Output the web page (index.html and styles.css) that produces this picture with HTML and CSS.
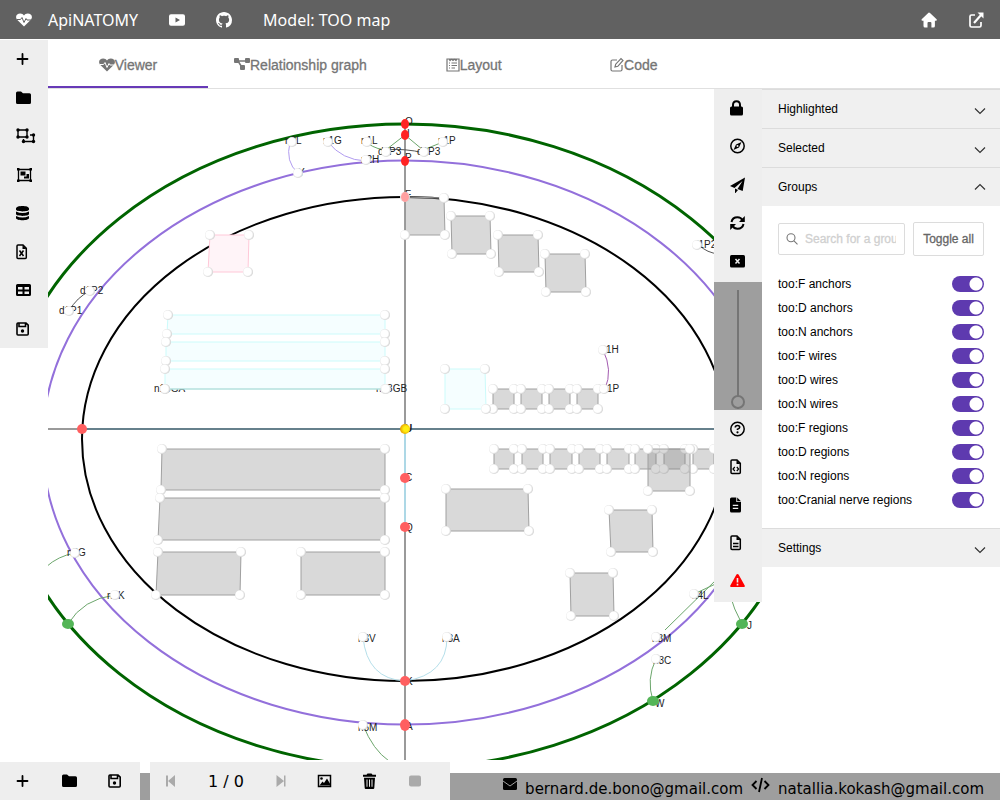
FILE: index.html
```html
<!DOCTYPE html>
<html lang="en">
<head>
<meta charset="utf-8">
<title>ApiNATOMY</title>
<link rel="stylesheet" href="styles.css">
</head>
<body>
<svg class="sprite" aria-hidden="true">
  <symbol id="heart" viewBox="0 0 16 16"><path fill="currentColor" d="M8 14.6 1.6 8.2C-1.6 4.8.7 1.4 4.2 1.4 6 1.4 7.2 2.3 8 3.4 8.8 2.3 10 1.4 11.8 1.4c3.5 0 5.8 3.4 2.6 6.8z"/><path fill="none" stroke="var(--cut)" d="M1 7.5h3.5L6 5.500l2 5 2-4 1 1.500h4"/></symbol>
  <symbol id="youtube" viewBox="0 0 16 16"><path fill="currentColor" fill-rule="evenodd" d="M2 2.300h12q2 0 2 2v7.400q0 2-2 2H2q-2 0-2-2V4.300q0-2 2-2zM6.500 5.500v5L11 8z"/></symbol>
  <symbol id="github" viewBox="0 0 16 16"><path fill="currentColor" d="M8 0C3.580 0 0 3.580 0 8c0 3.540 2.290 6.530 5.470 7.590.4.070.550-.170.550-.380 0-.190-.010-.820-.010-1.490-2.010.370-2.530-.490-2.690-.940-.090-.230-.480-.940-.820-1.130-.280-.150-.680-.520-.010-.530.630-.010 1.080.580 1.230.820.720 1.210 1.870.870 2.330.660.070-.520.280-.870.510-1.070-1.780-.200-3.640-.890-3.640-3.950 0-.870.310-1.590.820-2.150-.080-.200-.360-1.020.080-2.120 0 0 .670-.210 2.200.820.640-.180 1.320-.270 2-.270s1.360.090 2 .270c1.530-1.040 2.200-.820 2.200-.820.440 1.100.160 1.920.080 2.120.510.560.820 1.270.820 2.150 0 3.070-1.870 3.750-3.650 3.950.290.250.540.730.540 1.480 0 1.070-.010 1.930-.010 2.200 0 .210.150.460.550.380A8.010 8.010 0 0 0 16 8c0-4.420-3.580-8-8-8z"/></symbol>
  <symbol id="home" viewBox="0 0 16 16"><path fill="currentColor" d="M8 .5q.5 0 1 .5l6.600 6.200q.8 1.300-.7 1.500h-1V14q0 1.500-1.500 1.500h-2V11q0-1-1-1H7.500q-1 0-1 1v4.500H4q-1.500 0-1.500-1.500V8.700h-1Q0 8.500.7 7.200L7.200 1Q7.500.5 8 .5z"/></symbol>
  <symbol id="external" viewBox="0 0 16 16"><path fill="none" stroke="currentColor" stroke-width="1.700" d="M7 3H3.500Q2 3 2 4.500v9Q2 15 3.500 15h8q1.500 0 1.500-1.500V10"/><path fill="none" stroke="currentColor" stroke-width="2.200" d="m6 11 7.500-8.500"/><path fill="currentColor" d="M9.500.5h6v6z"/></symbol>
  <symbol id="graph" viewBox="0 0 16 16"><path fill="none" stroke="currentColor" stroke-width="1.500" d="M3 4h10M4 4l5 8"/><path fill="currentColor" d="M1 1h3q1 0 1 1v3q0 1-1 1H1Q0 6 0 5V2q0-1 1-1zm11 0h3q1 0 1 1v3q0 1-1 1h-3q-1 0-1-1V2q0-1 1-1zM7 8h3q1 0 1 1v3q0 1-1 1H7q-1 0-1-1V9q0-1 1-1z"/></symbol>
  <symbol id="form" viewBox="0 0 16 16"><path fill="none" stroke="currentColor" stroke-width="1.200" d="M3 2h12v12H3zM5 2l1 1.500L7.500 2 9 3.500 10.500 2 12 3.500 13 2M7.500 6H13M7.500 8.500H13M7.500 11H11M5 6h1M5 8.500h1M5 11h1"/></symbol>
  <symbol id="edit" viewBox="0 0 16 16"><path fill="none" stroke="currentColor" stroke-width="1.200" d="M9 3H4.500Q3 3 3 4.500v8Q3 14 4.500 14h8q1.500 0 1.500-1.500V8M7 10l.7-2.800L13 1.500l2 2L9.800 9.300z"/></symbol>
  <symbol id="plus" viewBox="0 0 16 16"><path fill="none" stroke="currentColor" stroke-width="1.800" stroke-linecap="round" d="M6.500 3v10M1.500 8h10"/></symbol>
  <symbol id="folder" viewBox="0 0 16 16"><path fill="currentColor" d="M1.500 1.500H5l2 1.700h6.500q1.500 0 1.500 1.500v7.800q0 1.500-1.500 1.500h-12Q0 14 0 12.500V3q0-1.500 1.500-1.500z"/></symbol>
  <symbol id="ungroup" viewBox="0 0 20 16"><path fill="none" stroke="currentColor" stroke-width="1.400" d="M2 2h9v7H2zM14 7h3.500v6.500H7.500V11"/><g fill="currentColor"><circle cx="2" cy="2" r="1.700"/><circle cx="11" cy="2" r="1.700"/><circle cx="2" cy="9" r="1.700"/><circle cx="11" cy="9" r="1.700"/><circle cx="17.500" cy="7" r="1.700"/><circle cx="17.500" cy="13.500" r="1.700"/><circle cx="7.500" cy="13.500" r="1.700"/></g></symbol>
  <symbol id="group" viewBox="0 0 16 16"><path fill="none" stroke="currentColor" stroke-width="1.300" d="M2.500 2.500h12v11h-12z"/><path fill="currentColor" d="M4.500 4.500h5v4h-5zm6 2.500H13v4.500H8v-2h2.500zM1 1h2.500v2.500H1zm12.500 0H16v2.500h-2.500zM1 12.500h2.500V15H1zm12.500 0H16V15h-2.500z"/></symbol>
  <symbol id="database" viewBox="0 0 16 16"><path fill="currentColor" d="M0 3.500C0 .2 13 .2 13 3.500V4.500C13 7 0 7 0 4.500zM0 6.500Q6.500 9.500 13 6.500V9C13 11.500 0 11.500 0 9zM0 11Q6.500 14 13 11v2C13 16 0 16 0 13z"/></symbol>
  <symbol id="file" viewBox="0 0 16 16"><path fill="none" stroke="currentColor" stroke-width="1.500" d="M2 1h5l3.300 3.300V13.500q0 1-1 1H2q-1 0-1-1V2q0-1 1-1z"/><path fill="currentColor" d="M6.500 1v4h4z"/></symbol>
  <symbol id="table" viewBox="0 0 16 16"><path fill="currentColor" fill-rule="evenodd" d="M1.500 2h12Q15 2 15 3.500v9q0 1.500-1.500 1.500h-12Q0 14 0 12.500v-9Q0 2 1.500 2zM2 5v2.500h4.500V5zm6.500 0v2.500H13V5zM2 9.500V12h4.500V9.500zm6.500 0V12H13V9.500z"/></symbol>
  <symbol id="save" viewBox="0 0 16 16"><path fill="none" stroke="currentColor" stroke-width="1.600" d="M2 2h8l2.200 2.200V13q0 1-1 1H2q-1 0-1-1V3q0-1 1-1zM3 2v3.500h6.500V2"/><circle cx="6.500" cy="10" r="1.700" fill="currentColor"/></symbol>
  <symbol id="lock" viewBox="0 0 16 16"><path fill="none" stroke="currentColor" stroke-width="2" d="M3 7V5q0-3.700 3.500-3.700T10 5v2"/><rect y="6.500" width="13" height="9" rx="1.500" fill="currentColor"/></symbol>
  <symbol id="compass" viewBox="0 0 16 16"><circle cx="7.500" cy="8" r="6.700" fill="none" stroke="currentColor" stroke-width="1.500"/><path fill="currentColor" fill-rule="evenodd" d="M11.500 4 9 9.500 3.500 12 6 6.500zM7.500 7a1 1 0 1 0 0 2 1 1 0 0 0 0-2z"/></symbol>
  <symbol id="plane" viewBox="0 0 16 16"><path fill="currentColor" d="M15 .5 12.700 14 7.500 12 12.500 4 4.500 11 0 9z"/><path fill="currentColor" d="M5 11.500 8 13l-2.500 3H5z"/></symbol>
  <symbol id="refresh" viewBox="0 0 16 16"><path fill="none" stroke="currentColor" stroke-width="2" d="M1.500 7Q2.500 2.300 7.500 2.300q3.500 0 5 3M13.500 9q-1 4.700-6 4.700-3.500 0-5-3"/><path fill="currentColor" d="M14.800 1v6H9zM.2 15V9H6z"/></symbol>
  <symbol id="close-box" viewBox="0 0 16 16"><rect y="2" width="15" height="12.500" rx="1.500" fill="currentColor"/><path fill="none" stroke="#eee" stroke-width="1.500" d="m5.500 6 4 4.500m0-4.500-4 4.500"/></symbol>
  <symbol id="help" viewBox="0 0 16 16"><circle cx="7.500" cy="8" r="6.700" fill="none" stroke="currentColor" stroke-width="1.500"/><path fill="none" stroke="currentColor" stroke-width="1.600" d="M5.300 6.500q0-2 2.200-2t2.200 1.800Q9.700 7.500 7.500 8.300V9"/><circle cx="7.500" cy="11.300" r="1.100" fill="currentColor"/></symbol>
  <symbol id="file-solid" viewBox="0 0 16 16"><path fill="currentColor" d="M1.500.5H6.300V5H11v9q0 1.500-1.500 1.500h-8Q0 15.500 0 14V2Q0 .5 1.500.5zM7.200.5 11 4.200H7.200z"/><path stroke="#eee" stroke-width="1.200" d="M2.800 8.300h5.400m-5.400 3h5.400"/></symbol>
  <symbol id="warning" viewBox="0 0 16 16"><path fill="#f00" d="M7.500 1q.8 0 1.200.8l6 10.700Q15.200 14 14 14H1Q-.2 14 .3 12.500l6-10.700Q6.700 1 7.500 1z"/><path stroke="#eee" stroke-width="1.600" d="M7.500 5v4.500m0 1.200v1.700"/></symbol>
  <symbol id="prev" viewBox="0 0 16 16"><path fill="currentColor" d="M0 2.500h2v11H0zm2 5.500 7-6v12z"/></symbol>
  <symbol id="next" viewBox="0 0 16 16"><path fill="currentColor" d="M8 2.500h1.500v11H8zM8 8 .5 2v12z"/></symbol>
  <symbol id="image" viewBox="0 0 16 16"><path fill="none" stroke="currentColor" stroke-width="1.500" d="M1.500 2.500h12v11h-12z"/><circle cx="4.500" cy="5.500" r="1.300" fill="currentColor"/><path fill="currentColor" d="m2.500 12.500 3-4L7 10l3-4.500 4 7z"/></symbol>
  <symbol id="trash" viewBox="0 0 16 16"><path fill="currentColor" fill-rule="evenodd" d="M4.500.5h4l1 1.200H13v2H0v-2h3.500zM1 4.700h11L11.300 15q-.1 1-1 1H2.700q-1 0-1-1zM3.500 6.500v7.300h1V6.500zm2.500 0v7.300h1V6.500zm2.500 0v7.300h1V6.500z"/></symbol>
  <symbol id="square" viewBox="0 0 16 16"><rect y="2.500" width="12" height="11" rx="2" fill="currentColor"/></symbol>
  <symbol id="mail" viewBox="0 0 16 16"><rect x="1" y="1" width="14" height="12" rx="1.500" fill="currentColor"/><path fill="none" stroke="#9e9e9e" d="m1 4 7 5 7-5"/></symbol>
  <symbol id="code" viewBox="0 0 20 16"><path fill="none" stroke="currentColor" stroke-width="1.800" d="M5.500 4 1.500 8l4 4m8-8 4 4-4 4M11 1 8 15"/></symbol>
  <symbol id="chevron" viewBox="0 0 12 12"><path fill="none" stroke="#333" stroke-width="1.200" d="m1 3.500 5 5 5-5"/></symbol>
</svg>

<header class="topbar">
  <a class="brand" href="#"><svg class="icon"><use href="#heart"/></svg><span>ApiNATOMY</span></a>
  <a class="top-link" href="#" aria-label="YouTube"><svg class="icon"><use href="#youtube"/></svg></a>
  <a class="top-link" href="#" aria-label="GitHub"><svg class="icon"><use href="#github"/></svg></a>
  <h1 class="model">Model: TOO map</h1>
  <a class="top-link" href="#" aria-label="Home"><svg class="icon"><use href="#home"/></svg></a>
  <a class="top-link" href="#" aria-label="Open in new window"><svg class="icon"><use href="#external"/></svg></a>
</header>

<main class="main">
  <div class="left-col">
    <nav class="rail rail-left" aria-label="Model">
      <button class="tool" aria-label="New"><svg class="icon"><use href="#plus"/></svg></button>
      <button class="tool" aria-label="Open"><svg class="icon"><use href="#folder"/></svg></button>
      <button class="tool" aria-label="Join"><svg class="icon wide"><use href="#ungroup"/></svg></button>
      <button class="tool" aria-label="Merge"><svg class="icon"><use href="#group"/></svg></button>
      <button class="tool" aria-label="Database"><svg class="icon"><use href="#database"/></svg></button>
      <button class="tool" aria-label="Import spreadsheet"><svg class="icon" viewBox="0 0 16 16"><use href="#file" width="16" height="16"/><path d="m3.500 6.500 4 5.500m0-5.500-4 5.500" fill="none" stroke="currentColor" stroke-width="1.500"/></svg></button>
      <button class="tool" aria-label="Table"><svg class="icon"><use href="#table"/></svg></button>
      <button class="tool" aria-label="Save"><svg class="icon"><use href="#save"/></svg></button>
    </nav>
  </div>
  <section class="content">
    <div class="tabs" role="tablist">
      <button class="tab active" role="tab"><svg class="tab-icon"><use href="#heart"/></svg>Viewer</button>
      <button class="tab" role="tab"><svg class="tab-icon"><use href="#graph"/></svg>Relationship graph</button>
      <button class="tab" role="tab"><svg class="tab-icon"><use href="#form"/></svg>Layout</button>
      <button class="tab" role="tab"><svg class="tab-icon"><use href="#edit"/></svg>Code</button>
    </div>
    <div class="workspace">
      <div class="canvas">
        <svg class="scene" viewBox="48 89 714 671" preserveAspectRatio="xMidYMid slice" role="img" aria-label="TOO map">
          <defs>
            <radialGradient id="ball" cx="45%" cy="47%" r="56%"><stop offset=".65" stop-color="#fff"/><stop offset="1" stop-color="#cacaca"/></radialGradient>
            <radialGradient id="gold" cx="60%" cy="50%" r="60%"><stop offset=".4" stop-color="#ffee10"/><stop offset="1" stop-color="#e59a00"/></radialGradient>
            <marker id="node" markerUnits="userSpaceOnUse" markerWidth="12" markerHeight="12" refX="6" refY="6"><circle cx="6" cy="6" r="5" fill="url(#ball)"/></marker>
          </defs>
          <g fill="none">
            <ellipse class="ring-green" cx="405" cy="446" rx="404" ry="322"/>
            <ellipse class="ring-purple" cx="405" cy="442.500" rx="362.500" ry="282"/>
            <ellipse class="ring-black" cx="405" cy="439" rx="323" ry="242"/>
            <path stroke="#9a9a9a" stroke-width="2" d="M405 125v635M48 429h34"/>
            <path stroke="#66808c" stroke-width="2" d="M82 429h680"/>
            <path stroke="#add8e6" stroke-width="2" d="M405 429v98"/>
          </g>
          <g class="wires">
            <path stroke="#b19cf0" d="M290 142q-5 20 8 31M328 142q14 18 38 19"/>
            <path stroke="#6ca66c" d="M367 143q12 8 20 6l18-14 18 15 20-8M75 553q-17 3-29 14M115 595q-32 4-47 29M656 659q-10 20-3 42M363 725q10 25 26 36M665 630l53-52M694 594l30-14M729 592q5 18 13 32"/>
            <path stroke="#555" d="M385 150q20-2 39 3M69 311q8-14 21-20M699 245q8 8 20 9"/>
            <path stroke="#a35bb0" d="M603 350q10 20 2 39"/>
            <path stroke="#b5dfea" d="M363 637q4 42 42 44M447 637q0 38-42 44"/>
          </g>
          <g class="labels">
            <text x="285" y="144">n2L</text><text x="323" y="144">n1G</text><text x="361" y="144">n1L</text>
            <text x="298" y="176">Y</text><text x="361" y="163">n2H</text><text x="378" y="155">d1P3</text>
            <text x="417" y="155">d1P3</text><text x="438" y="144">n1P</text><text x="693" y="248">d1P2</text>
            <text x="80" y="294">d1P2</text><text x="59" y="314">d1P1</text><text x="154" y="392">n13GA</text>
            <text x="376" y="392">n13GB</text><text x="606" y="353">1H</text><text x="607" y="392">1P</text>
            <text x="67" y="556">n2G</text><text x="107" y="599">n1K</text><text x="358" y="642">n3V</text>
            <text x="442" y="642">n3A</text><text x="358" y="731">n5M</text><text x="692" y="599">n4L</text>
            <text x="652" y="642">n3M</text><text x="653" y="664">n3C</text><text x="747" y="629">J</text>
            <text x="655" y="707">W</text><text x="405" y="125">O</text><text x="407" y="137">I</text>
            <text x="405" y="161">P</text><text x="405" y="198">F</text><text class="strong" x="405" y="432">U</text>
            <text x="405" y="481">C</text><text x="405" y="531">Q</text><text x="406" y="685">K</text><text x="406" y="730">A</text>
          </g>
          <g class="region gray">
            <path d="M405 197l39 1 1 37h-40z"/><path d="M451 216h39l1 38h-39z"/><path d="M498 235h40l1 37h-40z"/><path d="M545 254h40l1 38h-40z"/>
            <path d="M493 389h21v20h-21z"/><path d="M521 389h21v20h-21z"/><path d="M549 389h21v20h-21z"/><path d="M577 389h21v20h-21z"/>
            <path d="M494 449h20v20h-20z"/><path d="M522 449h21v20h-21z"/><path d="M550 449h22v20h-22z"/><path d="M579 449h21v20h-21z"/>
            <path d="M607 449h22v20h-22z"/><path d="M635 449h21v20h-21z"/><path d="M664 449h21v20h-21z"/><path d="M693 449h21v20h-21z"/>
            <path d="M648 449h42v42h-42z"/>
            <path d="M162 449h223v41H161z"/><path d="M160 498h225v42H158z"/><path d="M158 552h83l-1 43h-84z"/><path d="M301 552h84v43h-84z"/>
            <path d="M446 489h82l1 42h-83z"/><path d="M609 510h43l1 42h-42z"/><path d="M570 573h43l1 43h-43z"/>
          </g>
          <g class="region cyan">
            <path d="M168 315h217v19H167z"/><path d="M166 342h219v19H166z"/><path d="M165 369h220v20H165z"/><path d="M445 369h40l1 40h-41z"/>
          </g>
          <g class="region pink"><path d="M210 235h39l-1 37h-40z"/></g>
          <path stroke="#a8d5cf" d="M165 389h220"/>
          <path class="anchors" d="M292 142L328 142 367 142 298 173 366 160 386 152 424 152 443 142 697 245 90 291 69 311 165 389 386 389 603 350 604 389 75 553 115 595 363 637 447 637 363 725 694 594 656 637 656 659"/>
          <g fill="#ff2424"><ellipse cx="405" cy="124" rx="4" ry="5"/><ellipse cx="405" cy="135" rx="4" ry="5"/><ellipse cx="405" cy="161" rx="4" ry="5"/></g>
          <ellipse cx="405" cy="197" rx="4" ry="5" fill="#ffa0a0"/>
          <g fill="#ff5f60"><circle cx="82" cy="429" r="5"/><circle cx="405" cy="478" r="5"/><circle cx="405" cy="527" r="5"/><circle cx="405" cy="681" r="5"/><ellipse cx="405" cy="725" rx="5" ry="6"/></g>
          <circle cx="405" cy="429" r="5" fill="url(#gold)"/>
          <g fill="#54b557"><ellipse cx="68" cy="624" rx="6" ry="5"/><ellipse cx="742" cy="624" rx="6" ry="5"/><ellipse cx="653" cy="701" rx="6" ry="5"/></g>
        </svg>
        <div class="rail rail-right">
          <div class="tool-set">
            <button class="tool" aria-label="Lock"><svg class="icon"><use href="#lock"/></svg></button>
            <button class="tool" aria-label="Reset camera"><svg class="icon"><use href="#compass"/></svg></button>
            <button class="tool" aria-label="Fly"><svg class="icon"><use href="#plane"/></svg></button>
            <button class="tool" aria-label="Update"><svg class="icon"><use href="#refresh"/></svg></button>
            <button class="tool" aria-label="Hide panel"><svg class="icon"><use href="#close-box"/></svg></button>
          </div>
          <div class="zoom"><input type="range" class="slider" min="0" max="100" value="100" aria-label="Label size"></div>
          <div class="tool-set">
            <button class="tool" aria-label="Help"><svg class="icon"><use href="#help"/></svg></button>
            <button class="tool" aria-label="Export JSON"><svg class="icon" viewBox="0 0 16 16"><use href="#file" width="16" height="16"/><path d="M4.800 8 3 10l1.800 2M6.800 8l1.800 2-1.800 2" fill="none" stroke="currentColor" stroke-width="1.200"/></svg></button>
            <button class="tool" aria-label="Resource map"><svg class="icon"><use href="#file-solid"/></svg></button>
            <button class="tool" aria-label="Report"><svg class="icon" viewBox="0 0 16 16"><use href="#file" width="16" height="16"/><path d="M3 8.500h5.500M3 11.500h5.500" fill="none" stroke="currentColor" stroke-width="1.400"/></svg></button>
            <button class="tool" aria-label="Errors"><svg class="icon"><use href="#warning"/></svg></button>
          </div>
        </div>
      </div>
      <aside class="panel">
        <button class="fold">Highlighted<svg class="chevron"><use href="#chevron"/></svg></button>
        <button class="fold">Selected<svg class="chevron"><use href="#chevron"/></svg></button>
        <button class="fold open">Groups<svg class="chevron"><use href="#chevron"/></svg></button>
        <div class="groups">
          <div class="search-row">
            <label class="search"><svg class="search-icon" viewBox="0 0 12 12"><path fill="none" stroke="#777" stroke-width="1.100" d="M5 .8a4 4 0 1 0 0 8 4 4 0 0 0 0-8zM8 7.800l3.500 3.500"/></svg><input type="text" placeholder="Search for a group" aria-label="Search for a group"></label>
            <button class="toggle-all">Toggle all</button>
          </div>
          <label class="group">too:F anchors<input type="checkbox" class="switch" checked></label>
          <label class="group">too:D anchors<input type="checkbox" class="switch" checked></label>
          <label class="group">too:N anchors<input type="checkbox" class="switch" checked></label>
          <label class="group">too:F wires<input type="checkbox" class="switch" checked></label>
          <label class="group">too:D wires<input type="checkbox" class="switch" checked></label>
          <label class="group">too:N wires<input type="checkbox" class="switch" checked></label>
          <label class="group">too:F regions<input type="checkbox" class="switch" checked></label>
          <label class="group">too:D regions<input type="checkbox" class="switch" checked></label>
          <label class="group">too:N regions<input type="checkbox" class="switch" checked></label>
          <label class="group">too:Cranial nerve regions<input type="checkbox" class="switch" checked></label>
        </div>
        <button class="fold">Settings<svg class="chevron"><use href="#chevron"/></svg></button>
      </aside>
    </div>
  </section>
</main>

<footer class="footer">
  <div class="contacts">
    <a href="mailto:bernard.de.bono@gmail.com"><svg class="icon"><use href="#mail"/></svg><span>bernard.de.bono@gmail.com</span></a>
    <a href="mailto:natallia.kokash@gmail.com"><svg class="icon wide"><use href="#code"/></svg><span>natallia.kokash@gmail.com</span></a>
  </div>
  <div class="bars">
    <div class="bar">
      <button class="bar-tool" aria-label="New state"><svg class="icon"><use href="#plus"/></svg></button>
      <button class="bar-tool" aria-label="Open state"><svg class="icon"><use href="#folder"/></svg></button>
      <button class="bar-tool" aria-label="Save state"><svg class="icon"><use href="#save"/></svg></button>
    </div>
    <div class="bar pages">
      <button class="bar-tool" disabled aria-label="Previous"><svg class="icon"><use href="#prev"/></svg></button>
      <span class="pager">1 / 0</span>
      <button class="bar-tool narrow" disabled aria-label="Next"><svg class="icon"><use href="#next"/></svg></button>
      <button class="bar-tool" aria-label="Snapshot"><svg class="icon"><use href="#image"/></svg></button>
      <button class="bar-tool" aria-label="Delete"><svg class="icon"><use href="#trash"/></svg></button>
      <button class="bar-tool" disabled aria-label="Stop"><svg class="icon"><use href="#square"/></svg></button>
    </div>
  </div>
</footer>
</body>
</html>
```

FILE: styles.css
```css
* { box-sizing: border-box; }

body {
  --cut: #616161;
  margin: 0;
  min-height: 100vh;
  display: flex;
  flex-direction: column;
  background: #fff;
  color: #000;
  font: 12px "Liberation Sans", Arial, sans-serif;
}

button {
  border: 0;
  padding: 0;
  background: none;
  color: inherit;
  font: inherit;
}

a { color: inherit; text-decoration: none; }

.sprite { position: absolute; width: 0; height: 0; }
.icon { display: block; flex: none; width: 16px; height: 16px; }
.icon.wide { width: 20px; }

.topbar {
  display: flex;
  align-items: center;
  gap: 31px;
  height: 39px;
  margin-bottom: 1px;
  padding: 0 16px;
  background: #616161;
  color: #fff;
  font: 16px "Noto Sans", "DejaVu Sans", sans-serif;
}
.brand { display: flex; align-items: center; gap: 16px; }
.model { flex: 1; margin: 0; font: inherit; }

.main { flex: 1; display: flex; }
.left-col { width: 48px; flex: none; }

.rail { width: 48px; background: #eee; }
.rail-left { display: flex; flex-direction: column; height: 308px; }
.tool {
  flex: 1;
  display: flex;
  align-items: center;
  width: 100%;
  padding-left: 16px;
}

.content { flex: 1; min-width: 0; display: flex; flex-direction: column; }

.tabs {
  display: flex;
  height: 49px;
  border-bottom: 1px solid #e0e0e0;
}
.tab {
  --cut: #fff;
  display: flex;
  align-items: center;
  justify-content: center;
  min-width: 160px;
  padding: 4px 26px 0;
  border-bottom: 2px solid transparent;
  color: #757575;
  font-size: 14px;
  -webkit-text-stroke: 0.3px #757575;
}
.tab.active { border-bottom-color: #673ab7; }
.tab-icon { width: 16px; height: 16px; }

.workspace { flex: 1; display: flex; }
.canvas { position: relative; flex: 1; min-width: 0; min-height: 520px; overflow: hidden; }
.scene { position: absolute; inset: 0; width: 100%; height: 100%; }

.ring-green { stroke: #006400; stroke-width: 3px; }
.ring-purple { stroke: #9370db; stroke-width: 2px; }
.ring-black { stroke: #000; stroke-width: 2px; }
.wires { fill: none; stroke-width: 1px; }
.labels { fill: #222; font: 10px "Liberation Sans", Arial, sans-serif; }
.strong { font-weight: bold; }
.region path {
  marker-start: url(#node);
  marker-mid: url(#node);
}
.gray { fill: #8080804c; stroke: #a0a0a0; }
.cyan { fill: #f5feff; stroke: #ccfbfb; }
.pink { fill: #fff4f8; stroke: #ffc8d8; }
.anchors {
  fill: none;
  marker-start: url(#node);
  marker-mid: url(#node);
  marker-end: url(#node);
}

.rail-right { position: absolute; top: 0; right: 0; }
.tool-set { display: flex; flex-direction: column; height: 193px; padding-bottom: 2px; }
.zoom + .tool-set { height: 192px; }
.zoom {
  display: flex;
  justify-content: center;
  height: 128px;
  padding-top: 8px;
  background: #9e9e9e;
}
.slider {
  -webkit-appearance: none;
  appearance: none;
  writing-mode: vertical-lr;
  width: 14px;
  height: 119px;
  margin: 0;
  background: linear-gradient(#757575, #757575) center / 2px 100% no-repeat;
}
.slider::-webkit-slider-thumb {
  -webkit-appearance: none;
  width: 14px;
  height: 14px;
  border: 2px solid #757575;
  border-radius: 50%;
  background: #9e9e9e;
}

.panel { width: 238px; flex: none; background: #fff; }
.fold {
  display: flex;
  align-items: center;
  justify-content: space-between;
  width: 100%;
  height: 39px;
  padding: 0 14px 0 16px;
  border-top: 1px solid #dcdcdc;
  background: #f0f0f0;
}
.chevron { width: 12px; height: 12px; margin-top: 4px; }
.open .chevron { transform: rotate(180deg); margin-top: 0; }

.groups { padding: 16px; }
.search-row { display: flex; align-items: center; gap: 8px; margin-bottom: 16px; }
.search {
  flex: 1;
  min-width: 0;
  display: flex;
  align-items: center;
  gap: 7px;
  height: 32px;
  padding: 0 8px 0 7px;
  border: 1px solid #dcdcdc;
  border-radius: 2px;
}
.search-icon { flex: none; width: 12px; height: 12px; }
.search input {
  width: 100%;
  min-width: 0;
  padding: 0;
  border: 0;
  background: none;
  font: inherit;
}
.search input::placeholder { color: #d0d0d0; -webkit-text-stroke: 0.3px #d0d0d0; }
.toggle-all {
  flex: none;
  width: 71px;
  height: 34px;
  border: 1px solid #dcdcdc;
  border-radius: 2px;
  color: #666;
  -webkit-text-stroke: 0.3px #666;
}
.group { display: flex; align-items: center; justify-content: space-between; height: 24px; }
.switch {
  -webkit-appearance: none;
  appearance: none;
  width: 32px;
  height: 16px;
  margin: 0;
  border-radius: 8px;
  background: radial-gradient(circle at 24px 8px, #fff 6px, #5e3aaf 7px);
}

.footer { display: grid; align-items: end; height: 40px; }
.contacts, .bars { grid-area: 1 / 1; }
.contacts {
  display: flex;
  justify-content: flex-end;
  gap: 8px;
  height: 27px;
  padding-right: 16px;
  background: #9e9e9e;
  font: 15px "DejaVu Sans", Verdana, sans-serif;
}
.contacts a { display: flex; gap: 7px; }
.contacts .icon { margin-top: 4px; }
.contacts span { padding-top: 7px; }
.bars { display: flex; gap: 10px; justify-self: start; }
.bar { display: flex; align-items: center; height: 38px; padding-right: 2px; background: #eee; }
.bar.pages { padding-right: 11px; }
.bar-tool { width: 46px; height: 38px; padding-left: 16px; }
.bar-tool.narrow { width: 41px; }
.bar-tool:disabled { color: #aaa; }
.pager { width: 64px; padding-left: 12px; font: 16px "DejaVu Sans", Verdana, sans-serif; }
```
